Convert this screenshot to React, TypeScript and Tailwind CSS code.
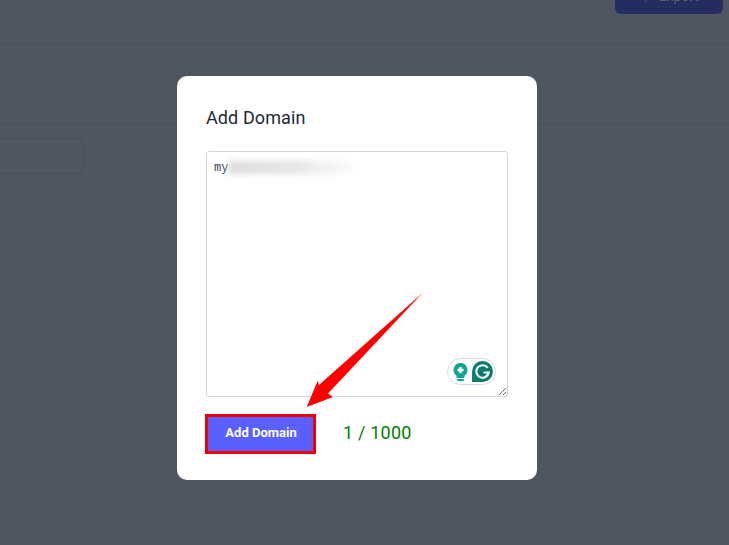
export default function App() {
  return (
    <div className="relative h-[545px] w-[729px] overflow-hidden bg-[#4f5660] font-['Roboto',sans-serif]">
      {/* dimmed page behind the modal */}
      <div className="flex h-[44px] justify-end border-b border-[#484e5a] pr-[6px]">
        <div className="flex h-[14px] w-[108px] items-end justify-center gap-[10px] overflow-hidden rounded-b-md bg-[#252c60] pb-[10px] pl-[4px] text-[14px] leading-[16px] text-[#5b6172]">
          <span className="text-[10px] leading-[10px]">+</span>
          <span>Export</span>
        </div>
      </div>
      <div className="h-[80px] border-b border-[#484e5a]" />
      <div className="mt-[14px] h-[36px] w-[84px] rounded-r-md border border-l-0 border-[#484e5a]" />

      <div className="absolute inset-0 flex items-start justify-center pt-[76px] pr-[15px]">
        <div className="flex h-[404px] w-[360px] flex-col rounded-[10px] bg-white pt-[29px] pr-[29px] pl-[29px]">
          <h2 className="text-[18px] leading-[26px] font-normal tracking-[0.1px] text-[#1f2937]">Add Domain</h2>
          <div className="relative mt-[20px] h-[246px] w-[302px]">
            <textarea
              readOnly
              value="my"
              spellCheck={false}
              className="block h-full w-full resize rounded-[3px] border border-[#d1d5db] bg-white px-[7px] py-[8px] font-['Liberation_Mono',monospace] text-[12px] leading-[16px] text-[#374151] outline-none"
            />
            <div className="absolute top-[10px] left-[22px] h-[13px] w-[135px] bg-gradient-to-r from-[#dcdcdc] via-[#e6e6e6] to-white blur-[3px]" />
            <div className="absolute top-[207px] left-[241px] flex h-[27px] w-[49px] items-center justify-between rounded-full border border-[#d5dbe6] bg-white pr-[1px] pl-[4px]">
              <svg width="17" height="20" viewBox="0 0 16 20" aria-hidden="true">
                <path d="M8 1a7 7 0 0 0-4 12.7V15a1 1 0 0 0 1 1h6a1 1 0 0 0 1-1v-1.3A7 7 0 0 0 8 1z" fill="#0fa68f" />
                <path d="M5.5 18h5" stroke="#0fa68f" strokeWidth="2" strokeLinecap="round" />
                <path d="M8 5v6M5 8h6" stroke="#fff" strokeWidth="2.4" />
              </svg>
              <svg width="23" height="23" viewBox="0 0 22 22" aria-hidden="true">
                <path d="M11 1a10 10 0 0 1 0 20H1V11A10 10 0 0 1 11 1z" fill="#0c7d6c" />
                <path d="M16 7.5A6 6 0 1 0 17 12h-5" fill="none" stroke="#fff" strokeWidth="2" />
              </svg>
            </div>
          </div>
          <div className="mt-[17px] -ml-[1px] flex items-center gap-[27px]">
            <button
              type="button"
              className="h-[40px] w-[111px] border-[3px] border-[#f40000] bg-[#5a5fff] pb-[2px] pl-[1px] text-[13px] font-bold text-white"
            >
              Add Domain
            </button>
            <span className="pb-[3px] text-[18px] tracking-[0.2px] text-[#008000]">1 / 1000</span>
          </div>
        </div>
      </div>

      {/* annotation arrow */}
      <svg className="absolute inset-0" width="729" height="545" viewBox="0 0 729 545" aria-hidden="true">
        <path d="M423 292.5 L328 393.5 L333 397 L306.7 407 L317.7 380.7 L319 385 Z" fill="#ff0000" />
      </svg>
    </div>
  );
}
